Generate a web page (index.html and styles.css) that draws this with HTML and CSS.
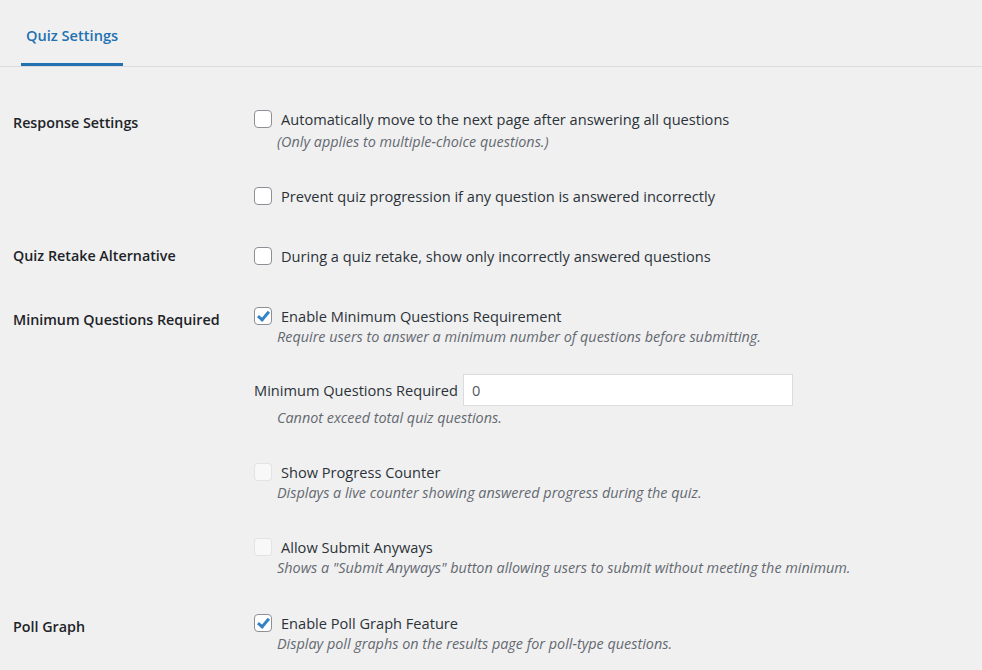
FILE: index.html
```html
<!DOCTYPE html>
<html lang="en">
<head>
    <meta charset="UTF-8">
    <title>Quiz Settings</title>
    <link rel="stylesheet" href="styles.css">
</head>
<body>
    <nav class="tabs">
        <a class="tab tab-active" href="#">Quiz Settings</a>
    </nav>

    <main class="settings">
        <!-- Response settings -->
        <section class="row">
            <div class="row-label">Response Settings</div>
            <div class="row-fields">
                <div class="option">
                    <label class="check"><input type="checkbox"> Automatically move to the next page after answering all questions</label>
                    <p class="description description-note">(Only applies to multiple-choice questions.)</p>
                </div>
                <div class="option option-gap">
                    <label class="check"><input type="checkbox"> Prevent quiz progression if any question is answered incorrectly</label>
                </div>
            </div>
        </section>

        <section class="row">
            <div class="row-label row-label-flush">Quiz Retake Alternative</div>
            <div class="row-fields">
                <div class="option">
                    <label class="check"><input type="checkbox"> During a quiz retake, show only incorrectly answered questions</label>
                </div>
            </div>
        </section>

        <!-- Minimum questions -->
        <section class="row">
            <div class="row-label">Minimum Questions Required</div>
            <div class="row-fields">
                <div class="option">
                    <label class="check"><input type="checkbox" checked> Enable Minimum Questions Requirement</label>
                    <p class="description">Require users to answer a minimum number of questions before submitting.</p>
                </div>
                <div class="option option-input">
                    <label class="inline-field">Minimum Questions Required <input type="number" class="text-input" value="0"></label>
                    <p class="description description-tight">Cannot exceed total quiz questions.</p>
                </div>
                <div class="option option-gap">
                    <label class="check"><input type="checkbox" disabled> Show Progress Counter</label>
                    <p class="description">Displays a live counter showing answered progress during the quiz.</p>
                </div>
                <div class="option option-gap">
                    <label class="check"><input type="checkbox" disabled> Allow Submit Anyways</label>
                    <p class="description">Shows a "Submit Anyways" button allowing users to submit without meeting the minimum.</p>
                </div>
            </div>
        </section>

        <section class="row row-last">
            <div class="row-label">Poll Graph</div>
            <div class="row-fields">
                <div class="option">
                    <label class="check"><input type="checkbox" checked> Enable Poll Graph Feature</label>
                    <p class="description">Display poll graphs on the results page for poll-type questions.</p>
                </div>
            </div>
        </section>
    </main>
</body>
</html>
```

FILE: styles.css
```css
body {
    margin: 0;
    background: #f0f0f1;
    color: #2c3338;
    font-family: 'Open Sans', 'Noto Sans', sans-serif;
    font-size: 14.6px;
    line-height: 20px;
}

/* Tab bar */
.tabs {
    display: flex;
    padding: 24px 0 0 21px;
    border-bottom: 1px solid #dcdcde;
}

.tab {
    padding: 0 5px 17px;
    line-height: 22px;
    color: #2271b1;
    font-weight: 600;
    font-size: 14.6px;
    text-decoration: none;
}

.tab-active {
    border-bottom: 3px solid #2271b1;
}

/* Settings rows */
.settings {
    padding: 22px 0 0 13px;
}

.row {
    display: grid;
    grid-template-columns: 241px 1fr;
    padding: 20px 0;
}

.row-last {
    padding-top: 15px;
}

.row-label {
    padding-top: 4px;
    font-weight: 600;
    font-size: 14.3px;
    color: #1d2327;
}

.row-label-flush {
    padding-top: 0;
}

.option-gap {
    margin-top: 34px;
}

.option-input {
    margin-top: 27px;
}

.check {
    display: flex;
    align-items: center;
    gap: 9px;
}

.check input {
    appearance: none;
    margin: 0;
    width: 18px;
    height: 18px;
    border: 1px solid #8c8f94;
    border-radius: 4px;
    background: #fff;
    position: relative;
}

.check input:checked::after {
    content: "";
    position: absolute;
    left: 5px;
    top: 1px;
    width: 4px;
    height: 9px;
    border: solid #3582c4;
    border-width: 0 3px 3px 0;
    transform: rotate(40deg);
}

.check input:disabled {
    border-color: rgba(220, 220, 222, 0.75);
    background: rgba(255, 255, 255, 0.5);
}

.description {
    margin: 1px 0 0 23px;
    font-style: italic;
    font-size: 14.4px;
    color: #646970;
}

.description-note {
    margin-top: 3px;
}

.description-tight {
    margin-top: 2px;
}

.inline-field {
    display: flex;
    align-items: center;
    gap: 5px;
}

.text-input {
    width: 330px;
    height: 32px;
    box-sizing: border-box;
    padding: 0 8px;
    border: 1px solid #dcdcde;
    border-radius: 0;
    background: #fff;
    font-family: inherit;
    font-size: 14.6px;
    color: #50575e;
    -moz-appearance: textfield;
}

.text-input::-webkit-inner-spin-button,
.text-input::-webkit-outer-spin-button {
    -webkit-appearance: none;
}
```
